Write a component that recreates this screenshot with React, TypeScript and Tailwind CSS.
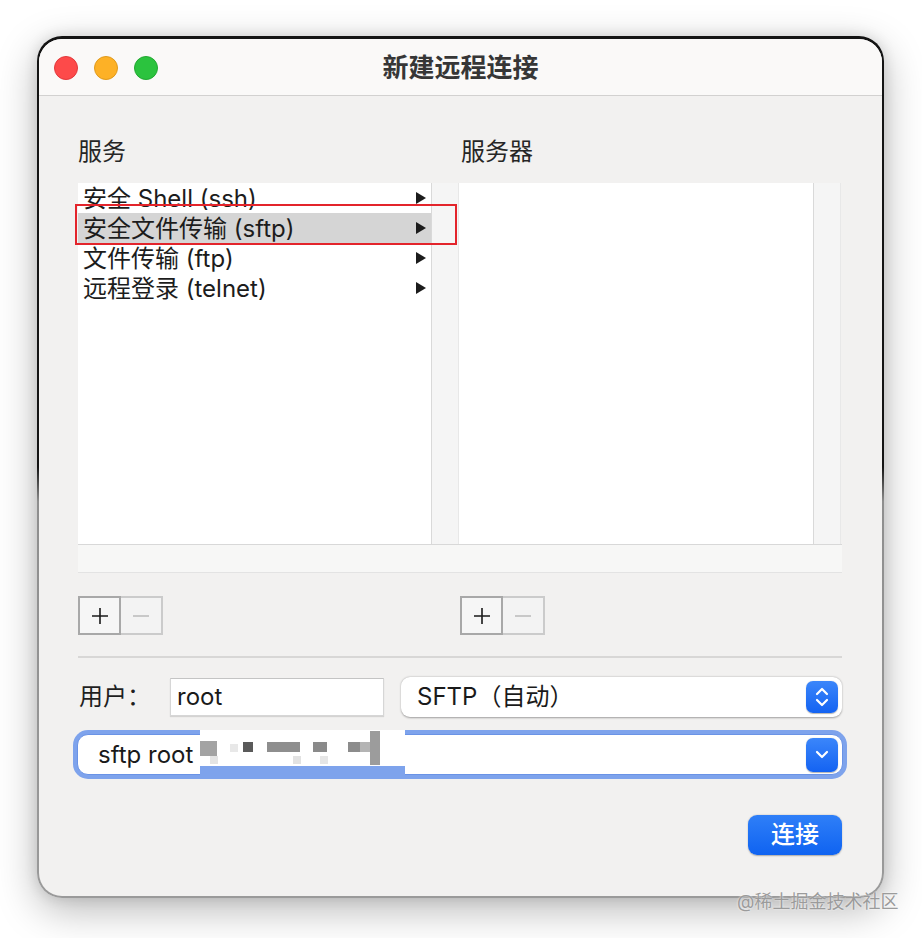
import React from 'react';

const font = { fontFamily: '"Inter", "Noto Sans CJK SC", sans-serif' };

const services = [
  { label: '安全 Shell (ssh)', selected: false },
  { label: '安全文件传输 (sftp)', selected: true },
  { label: '文件传输 (ftp)', selected: false },
  { label: '远程登录 (telnet)', selected: false },
];

const Arrow: React.FC = () => (
  <svg width="12" height="14" viewBox="0 0 12 14" className="shrink-0">
    <path d="M1 1 L11 7 L1 13 Z" fill="#1c1c1c" />
  </svg>
);

const PlusMinus: React.FC = () => (
  <div className="flex h-[39px]">
    <div className="w-[43px] h-full bg-[#f6f6f6] border-2 border-[#a8a8a8] flex items-center justify-center">
      <svg width="18" height="18" viewBox="0 0 18 18">
        <path d="M9 1 V17 M1 9 H17" stroke="#1a1a1a" strokeWidth="1.6" />
      </svg>
    </div>
    <div className="w-[42px] h-full bg-[#f3f3f3] border-2 border-l-0 border-[#cbcbcb] flex items-center justify-center">
      <svg width="18" height="4" viewBox="0 0 18 4">
        <path d="M1 2 H17" stroke="#bdbdbd" strokeWidth="1.6" />
      </svg>
    </div>
  </div>
);

const Column: React.FC<{ children?: React.ReactNode; width: string }> = ({ children, width }) => (
  <div className={`${width} h-full flex`}>
    <div className="flex-1 h-full bg-white">{children}</div>
    <div className="w-[28px] h-full bg-[#f5f5f5] border-l border-[#d9d9d9] border-r border-r-[#e8e8e8]" />
  </div>
);

const BlueButton: React.FC<{ children: React.ReactNode; h: string }> = ({ children, h }) => (
  <div className={`w-[32px] ${h} rounded-[7px] bg-[linear-gradient(#3b86fa,#1463f2)] flex items-center justify-center shadow-[0_0.5px_1px_rgba(0,0,0,0.3)]`}>
    {children}
  </div>
);

export default function App() {
  return (
    <div className="relative w-[922px] h-[938px] bg-white overflow-hidden" style={font}>
      <div className="pt-[36px] pl-[37px]">
        <div className="w-[847px] h-[862px] rounded-[25px] px-[2px] pt-[3px] pb-[2px] bg-[linear-gradient(#141414_0%,#141414_50%,#8e8e8e_54%,#9a9a9a_100%)] shadow-[0_12px_40px_rgba(0,0,0,0.28),0_0_14px_rgba(0,0,0,0.12)]">
          <div className="h-full rounded-[23px] overflow-hidden bg-[#f2f1f0] flex flex-col">
            {/* title bar */}
            <div className="relative h-[57px] shrink-0 bg-[#faf9f8] border-b border-[#d2d1d0] flex items-center justify-center">
              <div className="absolute left-[15px] top-[17px] flex gap-[16px]">
                <div className="w-[24px] h-[24px] rounded-full bg-[#fd4a4a] border border-[#e2393c]" />
                <div className="w-[24px] h-[24px] rounded-full bg-[#fdb126] border border-[#df9a1d]" />
                <div className="w-[24px] h-[24px] rounded-full bg-[#2bc33e] border border-[#22a832]" />
              </div>
              <div className="text-[26px] font-bold text-[#363636] leading-none pt-[1px]">新建远程连接</div>
            </div>

            {/* body */}
            <div className="pl-[39px] pr-[40px] pt-[40px] flex flex-col">
              <div className="h-[47px] grid grid-cols-[382px_1fr]">
                <div className="text-[24px] leading-[32px] text-[#262626]">服务</div>
                <div className="text-[24px] leading-[32px] text-[#262626] pl-[1px]">服务器</div>
              </div>

              <div className="relative">
                <div className="h-[362px] flex border-b border-[#d8d8d8]">
                  <Column width="w-[381px]">
                    {services.map((s) => (
                      <div
                        key={s.label}
                        className={`h-[30px] flex items-center justify-between pl-[5px] pr-[4px] ${s.selected ? 'bg-[#d5d5d5]' : ''}`}
                      >
                        <span className="text-[24px] leading-none text-[#1c1c1c] pt-[1px]">{s.label}</span>
                        <Arrow />
                      </div>
                    ))}
                  </Column>
                  <Column width="w-[382px]" />
                </div>
                <div className="h-[28px] bg-[#f7f7f6] border-b border-[#e3e3e3]" />
                <div className="absolute left-[-3px] top-[21px] w-[382px] h-[41px] border-2 border-[#e3242b]" />
              </div>

              <div className="mt-[23px] grid grid-cols-[382px_1fr]">
                <PlusMinus />
                <PlusMinus />
              </div>

              <div className="mt-[21px] h-[2px] bg-[#d8d7d6]" />

              <div className="mt-[19px] h-[40px] flex items-center">
                <div className="w-[92px] text-[24px] text-[#1f1f1f] pl-[1px]">用户：</div>
                <div className="w-[214px] h-[38px] bg-white border border-[#d6d6d6] border-t-[#c4c4c4] shadow-[0_1px_1px_rgba(0,0,0,0.12)] flex items-center pl-[6px]">
                  <span className="text-[24px] text-[#1a1a1a]">root</span>
                </div>
                <div className="ml-[17px] flex-1 h-[40px] rounded-[9px] bg-white shadow-[0_0.5px_2px_rgba(0,0,0,0.35)] flex items-center justify-between pl-[16px] pr-[4px]">
                  <span className="text-[24px] text-[#1a1a1a]">SFTP（自动）</span>
                  <BlueButton h="h-[32px]">
                    <svg width="16" height="24" viewBox="0 0 16 24">
                      <path d="M3 9 L8 4 L13 9 M3 15 L8 20 L13 15" stroke="white" strokeWidth="2.2" fill="none" strokeLinecap="round" strokeLinejoin="round" />
                    </svg>
                  </BlueButton>
                </div>
              </div>

              <div className="relative mt-[13px] mx-[-5px] h-[49px] rounded-[15px] bg-[#7ea3ec] p-[4px]">
                <div className="h-full rounded-[11px] bg-white border border-[#6a93e6] flex items-center justify-between pl-[20px] pr-[4px]">
                  <span className="text-[24px] text-[#1a1a1a]">sftp root</span>
                  <BlueButton h="h-[34px]">
                    <svg width="16" height="12" viewBox="0 0 16 12">
                      <path d="M3 3 L8 8 L13 3" stroke="white" strokeWidth="2.2" fill="none" strokeLinecap="round" strokeLinejoin="round" />
                    </svg>
                  </BlueButton>
                </div>
                {/* pixelated mask */}
                <div className="absolute left-[127px] top-0 w-[205px] h-[46px] flex flex-col">
                  <div className="relative h-[36px] bg-white">
                    <div className="absolute left-0 top-[11px] w-[17px] h-[15px] bg-[#a3a3a3]" />
                    <div className="absolute left-[10px] top-[26px] w-[8px] h-[8px] bg-[#e4e4e4]" />
                    <div className="absolute left-[30px] top-[14px] w-[8px] h-[8px] bg-[#e8e8e8]" />
                    <div className="absolute left-[43px] top-[12px] w-[10px] h-[10px] bg-[#5a5a5a]" />
                    <div className="absolute left-[67px] top-[12px] w-[33px] h-[10px] bg-[#8e8e8e]" />
                    <div className="absolute left-[93px] top-[26px] w-[8px] h-[8px] bg-[#e2e2e2]" />
                    <div className="absolute left-[113px] top-[12px] w-[14px] h-[10px] bg-[#8a8a8a]" />
                    <div className="absolute left-[120px] top-[26px] w-[8px] h-[8px] bg-[#e6e6e6]" />
                    <div className="absolute left-[148px] top-[12px] w-[12px] h-[10px] bg-[#8c8c8c]" />
                    <div className="absolute left-[160px] top-[12px] w-[10px] h-[10px] bg-[#b4b4b4]" />
                    <div className="absolute left-[170px] top-[1px] w-[10px] h-[34px] bg-[#9c9c9c]" />
                  </div>
                  <div className="h-[10px] bg-[#7ea3ec]" />
                </div>
              </div>

              <div className="mt-[36px] flex justify-end">
                <div className="w-[94px] h-[40px] rounded-[9px] bg-[linear-gradient(#2f7ff8,#0f63f1)] shadow-[0_0.5px_1.5px_rgba(0,0,0,0.3)] flex items-center justify-center">
                  <span className="text-[24px] text-white font-medium leading-none">连接</span>
                </div>
              </div>
            </div>
          </div>
        </div>
      </div>

      <div className="absolute left-[737px] top-[890px] text-[18px] text-[#9b9b9b] leading-[24px] [text-shadow:0_0_2px_white]">
        @稀土掘金技术社区
      </div>
    </div>
  );
}
